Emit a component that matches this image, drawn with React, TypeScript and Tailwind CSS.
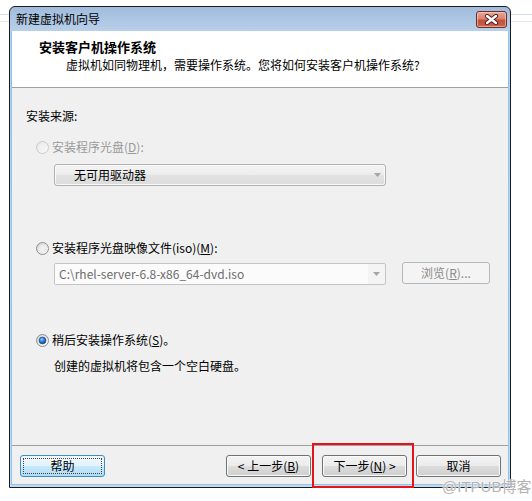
import React from "react";

function CloseButton() {
  return (
    <div className="mt-[4px] w-[31px] h-[17px] rounded-[3px] border border-[#6e2b27] bg-[linear-gradient(#e8a898_0%,#d9826f_45%,#c4503a_55%,#c9634c_100%)] shadow-[inset_0_0_0_1px_rgba(255,220,210,0.55)] flex items-center justify-center">
      <svg width="15" height="11" viewBox="0 0 15 11">
        <path d="M3 2 L12 9 M12 2 L3 9" stroke="#4a1d1a" strokeWidth="4.2" strokeLinecap="round" />
        <path d="M3 2 L12 9 M12 2 L3 9" stroke="#ffffff" strokeWidth="2.4" strokeLinecap="round" />
      </svg>
    </div>
  );
}

function Radio({ state }: { state: "disabled" | "off" | "on" }) {
  const ring = state === "disabled" ? "#c8c8c8" : "#8e8f8f";
  return (
    <svg width="13" height="13" viewBox="0 0 13 13" className="shrink-0">
      <defs>
        <linearGradient id={"rg-" + state} x1="0" y1="0" x2="1" y2="1">
          <stop offset="0" stopColor={state === "disabled" ? "#e6e6e6" : "#d2d2d2"} />
          <stop offset="1" stopColor="#fbfbfb" />
        </linearGradient>
        <radialGradient id="dot" cx="0.4" cy="0.35" r="0.7">
          <stop offset="0" stopColor="#8fd3fb" />
          <stop offset="0.5" stopColor="#2a7ad0" />
          <stop offset="1" stopColor="#143c82" />
        </radialGradient>
      </defs>
      <circle cx="6.5" cy="6.5" r="6" fill={"url(#rg-" + state + ")"} stroke={ring} />
      {state === "on" ? (
        <circle cx="6.5" cy="6.5" r="3.4" fill="url(#dot)" stroke="#1d4f93" strokeWidth="0.7" />
      ) : (
        <circle cx="6.5" cy="6.5" r="3.5" fill={state === "disabled" ? "#f1f1f1" : "#eeeeee"} />
      )}
    </svg>
  );
}

function Arrow() {
  return (
    <svg width="7" height="4" viewBox="0 0 7 4">
      <path d="M0 0 L7 0 L3.5 4 Z" fill="#a6a6a6" />
    </svg>
  );
}

function Button({ children, primary }: { children: React.ReactNode; primary?: boolean }) {
  if (primary) {
    return (
      <div className="w-[85px] h-[22px] rounded-[3px] border border-[#3c8fc4] bg-[linear-gradient(#eef8fe_0%,#e1f3fd_50%,#c9eafd_50%,#addcf7_100%)] p-[2px]">
        <div className="w-full h-full border border-dotted border-[#5a3a2a] flex items-center justify-center leading-[16px]">
          {children}
        </div>
      </div>
    );
  }
  return (
    <div className="w-[85px] h-[22px] rounded-[3px] border border-[#707070] bg-[linear-gradient(#f3f3f3_0%,#ebebeb_50%,#dddddd_50%,#cfcfcf_100%)] shadow-[inset_0_0_0_1px_#fbfbfb] flex items-center justify-center leading-[16px]">
      {children}
    </div>
  );
}

export default function App() {
  return (
    <div className="relative w-[532px] h-[501px] bg-white overflow-hidden pt-[6px] font-['Noto_Sans_CJK_SC',sans-serif] text-[12px] text-black">
      {/* faint lines behind the window */}
      <div className="absolute left-0 top-[14px] w-full h-px bg-[#d5dde8]" />
      <div className="absolute left-0 top-[21px] w-full h-px bg-[#e4e9f0]" />

      {/* window */}
      <div className="relative ml-[9px] w-[502px] h-[482px] flex flex-col border border-[#1c1c1c] rounded-t-[6px] bg-[linear-gradient(#a0bbdc_0px,#b9d0ea_24px,#c4d8ee_100%)]">
        {/* title bar */}
        <div className="h-[24px] flex items-start justify-between pl-[6px] pr-[3px] shrink-0">
          <span className="leading-[24px]">新建虚拟机向导</span>
          <CloseButton />
        </div>

        <div className="flex-1 flex flex-col mx-[1px] mb-[2px] border-l border-r border-b border-[#8cc4ee]">
          {/* header */}
          <div className="h-[57px] shrink-0 bg-white border-b border-[#a0a0a0] pl-[27px] pt-[8px]">
            <div className="text-[13px] font-bold leading-[16px]">安装客户机操作系统</div>
            <div className="ml-[27px] mt-[1px] leading-[18px]">
              虚拟机如同物理机，需要操作系统。您将如何安装客户机操作系统?
            </div>
          </div>

          {/* body */}
          <div className="flex-1 bg-[#f0f0f0] flex flex-col">
            <div className="ml-[14px] mt-[20px] leading-[16px]">安装来源:</div>

            <div className="ml-[24px] mt-[15px] h-[16px] flex items-center gap-[3px] text-[#9a9a9a]">
              <Radio state="disabled" />
              <span className="leading-[16px]">
                安装程序光盘(<span className="underline">D</span>):
              </span>
            </div>

            <div className="ml-[42px] mt-[9px] w-[332px] h-[22px] rounded-[3px] border border-[#b0b0b0] bg-[linear-gradient(#f4f4f4_0%,#ececec_50%,#e2e2e2_50%,#dcdcdc_100%)] shadow-[inset_0_0_0_1px_#fafafa] flex items-center pl-[19px] pr-[4px]">
              <span className="flex-1 leading-[16px]">无可用驱动器</span>
              <Arrow />
            </div>

            <div className="ml-[24px] mt-[54px] h-[16px] flex items-center gap-[3px]">
              <Radio state="off" />
              <span className="leading-[16px]">
                安装程序光盘映像文件(iso)(<span className="underline">M</span>):
              </span>
            </div>

            <div className="ml-[42px] mt-[7px] flex items-start gap-[16px]">
              <div className="w-[332px] h-[22px] border border-[#c4c4c4] rounded-[2px] bg-[#f4f4f4] flex">
                <div className="w-[313px] h-full bg-[#fbfbfb] pl-[4px] flex items-center text-[#6d6d6d] leading-[16px]">
                  C:\rhel-server-6.8-x86_64-dvd.iso
                </div>
                <div className="flex-1 flex items-center justify-center">
                  <Arrow />
                </div>
              </div>
              <div className="w-[88px] h-[22px] -mt-[1px] rounded-[3px] border border-[#b4b8bb] bg-[#f4f4f4] flex items-center justify-center text-[#8a8a8a] leading-[16px]">
                浏览(<span className="underline">R</span>)...
              </div>
            </div>

            <div className="ml-[24px] mt-[47px] h-[16px] flex items-center gap-[3px]">
              <Radio state="on" />
              <span className="leading-[16px]">
                稍后安装操作系统(<span className="underline">S</span>)。
              </span>
            </div>

            <div className="ml-[42px] mt-[10px] leading-[16px]">创建的虚拟机将包含一个空白硬盘。</div>
          </div>

          {/* footer */}
          <div className="h-[39px] shrink-0 border-t border-[#a0a0a0] bg-[#f0f0f0] flex items-start pt-[9px] pl-[8px] pr-[7px]">
            <Button primary>帮助</Button>
            <div className="ml-auto flex gap-[11px]">
              <Button>&lt; 上一步(<span className="underline">B</span>)</Button>
              <Button>
                下一步(<span className="underline">N</span>) &gt;
              </Button>
            </div>
            <div className="ml-[9px]">
              <Button>取消</Button>
            </div>
          </div>
        </div>
      </div>

      {/* red annotation box */}
      <div className="absolute left-[312px] top-[443px] w-[102px] h-[45px] border-2 border-[#e5141b]" />

      {/* watermark */}
      <div className="absolute left-[442px] top-[477px] text-[15px] leading-[19px] text-[#b3b3b3] font-['Liberation_Sans','Noto_Sans_CJK_SC',sans-serif] [text-shadow:0_0_1px_#fff,0_0_2px_#fff]">
        @ITPUB博客
      </div>
    </div>
  );
}
